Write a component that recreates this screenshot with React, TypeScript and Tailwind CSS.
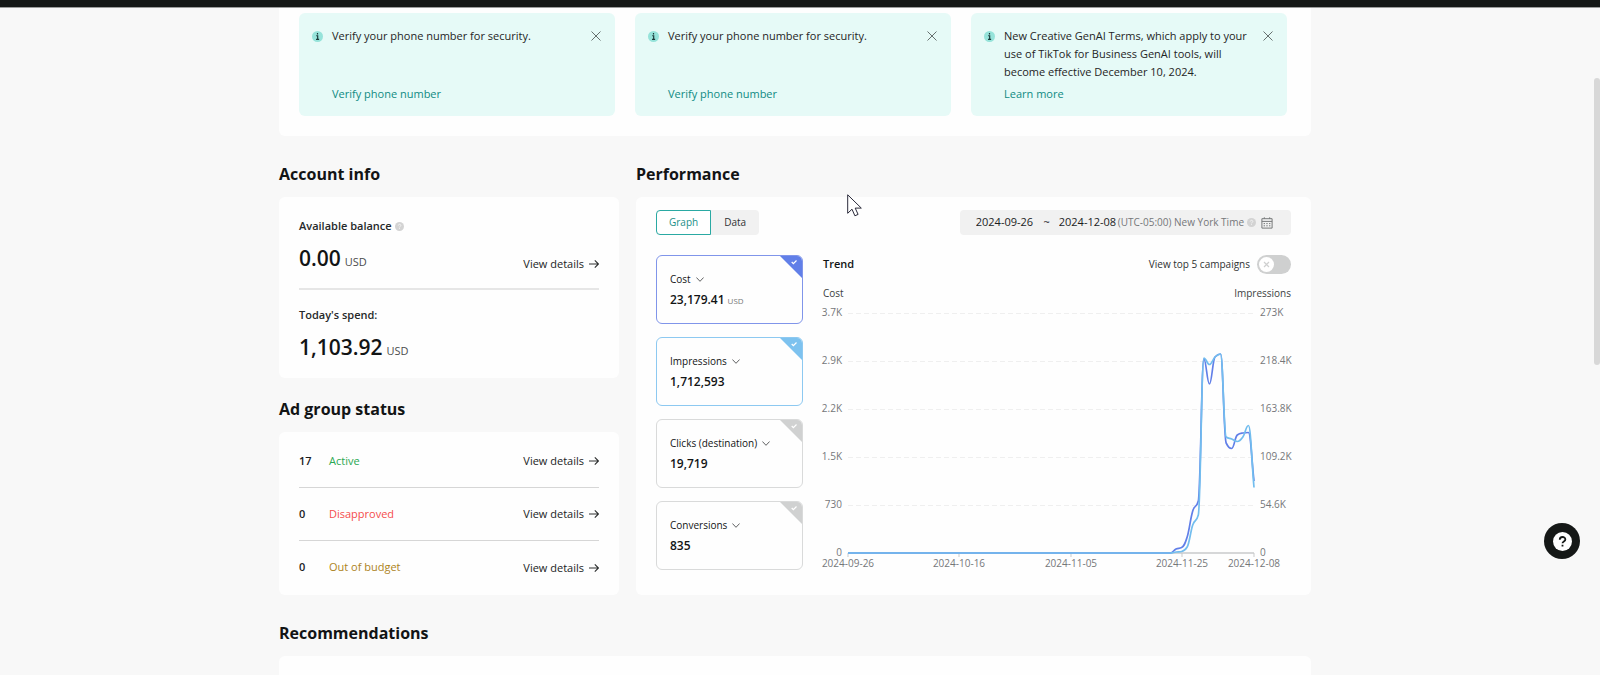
import { useState } from "react";
import type { ReactNode } from "react";

type Point = [number, number];

const DAY = 5.57;
const PLOT_LEFT = 25;
const PLOT_RIGHT = 431;
const AXIS_Y = 250;

const costLevels = [250, 246, 244.5, 234, 208, 198, 56, 81, 54, 51, 140, 145.5, 132, 130, 129.5, 178];
const impressionLevels = [250, 249, 248.5, 244, 222, 212, 55, 61.5, 54, 51, 134, 136, 138.5, 134, 122.5, 184.5];

function toSeries(levels: number[]): Point[] {
  const tail = levels.map((y, i): Point => [PLOT_RIGHT - (levels.length - 1 - i) * DAY, y]);
  return [[PLOT_LEFT, AXIS_Y], ...tail];
}

function smoothPath(points: Point[]): string {
  const n = points.length;
  const slopes = points.slice(1).map((p, i) => (p[1] - points[i][1]) / (p[0] - points[i][0]));
  const tangents = points.map((_, i) => {
    if (i === 0) return slopes[0];
    if (i === n - 1) return slopes[n - 2];
    const a = slopes[i - 1];
    const b = slopes[i];
    if (a * b <= 0) return 0;
    return Math.sign(a) * Math.min(Math.abs(a), Math.abs(b), Math.abs(a + b) / 4) * 2;
  });
  let d = `M${points[0][0]},${points[0][1]}`;
  for (let i = 1; i < n; i++) {
    const [x0, y0] = points[i - 1];
    const [x1, y1] = points[i];
    const h = (x1 - x0) / 2.4;
    d += `C${x0 + h},${y0 + tangents[i - 1] * h} ${x1 - h},${y1 - tangents[i] * h} ${x1},${y1}`;
  }
  return d;
}

const gridRows = [
  { y: 10, left: "3.7K", right: "273K" },
  { y: 58, left: "2.9K", right: "218.4K" },
  { y: 106, left: "2.2K", right: "163.8K" },
  { y: 154, left: "1.5K", right: "109.2K" },
  { y: 202, left: "730", right: "54.6K" },
  { y: 250, left: "0", right: "0" },
];

const dateTicks = [
  { x: 25, label: "2024-09-26" },
  { x: 136, label: "2024-10-16" },
  { x: 248, label: "2024-11-05" },
  { x: 359, label: "2024-11-25" },
  { x: 431, label: "2024-12-08" },
];

function TrendChart() {
  return (
    <svg viewBox="0 0 468 268" className="block w-full overflow-visible text-[10px]" role="img" aria-label="Cost and impressions trend">
      {gridRows.map((row) => (
        <g key={row.y} fill="#75777a">
          {row.y < AXIS_Y && (
            <line x1={PLOT_LEFT} x2={PLOT_RIGHT} y1={row.y + 0.5} y2={row.y + 0.5} stroke="#efefef" strokeDasharray="5 3" />
          )}
          <text x="19" y={row.y + 3} textAnchor="end">{row.left}</text>
          <text x="437" y={row.y + 3}>{row.right}</text>
        </g>
      ))}
      <line x1={PLOT_LEFT} x2={PLOT_RIGHT} y1={AXIS_Y} y2={AXIS_Y} stroke="#c9cacb" strokeWidth="1.5" />
      {dateTicks.map((tick) => (
        <g key={tick.label}>
          <line x1={tick.x} x2={tick.x} y1={AXIS_Y} y2={AXIS_Y + 4} stroke="#c9cacb" />
          <text x={tick.x} y={AXIS_Y + 14} textAnchor="middle" fill="#75777a">{tick.label}</text>
        </g>
      ))}
      <path d={smoothPath(toSeries(costLevels))} fill="none" stroke="#617fe8" strokeWidth="1.7" />
      <path d={smoothPath(toSeries(impressionLevels))} fill="none" stroke="#72bdee" strokeWidth="1.7" />
    </svg>
  );
}

function InfoIcon() {
  return (
    <svg viewBox="0 0 12 12" className="mt-[4px] size-[11px] shrink-0" aria-hidden="true">
      <circle cx="6" cy="6" r="6" fill="#96e3da" />
      <path d="M6 2.2v1.6M4.6 5.2H6.2V9M4.4 9.2h3.4" stroke="#1b3a3a" strokeWidth="1.3" fill="none" />
    </svg>
  );
}

function HelpDot() {
  return (
    <svg viewBox="0 0 10 10" className="size-[9px] shrink-0" aria-hidden="true">
      <circle cx="5" cy="5" r="5" fill="#d3d3d3" />
      <path d="M3.6 4c0-1.9 2.9-1.8 2.9-.2C6.5 4.9 5 4.8 5 6M5 6.9v.9" stroke="#f5f5f5" strokeWidth="1" fill="none" />
    </svg>
  );
}

function Notice({ text, action }: { text: string; action: string }) {
  return (
    <section className="flex items-start rounded-md bg-[#e6faf7] pt-[14px] pr-[14px] pb-[13px] pl-[13px]">
      <InfoIcon />
      <div className="ml-[9px] flex-1">
        <p className="min-h-[54px] text-[11px] leading-[18px] text-[#1f2525]">{text}</p>
        <a href="#" className="mt-1 block text-[11px] leading-[18px] text-[#0f8a83]">{action}</a>
      </div>
      <button type="button" aria-label="Dismiss" className="mt-[4px] ml-[10px] shrink-0">
        <svg viewBox="0 0 10 10" className="size-[10px]">
          <path d="M.5.5l9 9M9.5.5l-9 9" stroke="#66706f" strokeWidth="1" />
        </svg>
      </button>
    </section>
  );
}

function ViewDetails() {
  return (
    <a href="#" className="flex items-center gap-[5px] text-[11px] leading-[18px] text-[#222424]">
      View details
      <svg viewBox="0 0 10 10" className="size-[10px]" aria-hidden="true">
        <path d="M0 5h9.4M5.8 1.4L9.4 5 5.8 8.6" stroke="#2e3030" strokeWidth="1.1" fill="none" />
      </svg>
    </a>
  );
}

function Amount({ value }: { value: string }) {
  return (
    <p className="flex items-baseline gap-1 text-[21px] leading-[30px] font-semibold text-[#121415]">
      {value}
      <span className="text-[11px] leading-[18px] font-normal text-[#4a4c4d]">USD</span>
    </p>
  );
}

function SectionTitle({ children }: { children: ReactNode }) {
  return <h2 className="mb-[11px] text-base leading-6 font-bold text-[#121415]">{children}</h2>;
}

interface Metric {
  name: string;
  value: string;
  unit?: string;
  checked: boolean;
  border: string;
  corner: string;
}

const metrics: Metric[] = [
  { name: "Cost", value: "23,179.41", unit: "USD", checked: true, border: "border-[#8095ea]", corner: "text-[#617fe8]" },
  { name: "Impressions", value: "1,712,593", checked: true, border: "border-[#8dc9f1]", corner: "text-[#7dc2ef]" },
  { name: "Clicks (destination)", value: "19,719", checked: false, border: "border-[#d9dada]", corner: "text-[#d0d1d1]" },
  { name: "Conversions", value: "835", checked: false, border: "border-[#d9dada]", corner: "text-[#d0d1d1]" },
];

function MetricCard({ metric }: { metric: Metric }) {
  return (
    <div className={`relative h-[69px] overflow-hidden rounded-md border pt-[14px] pl-[13px] ${metric.border}`}>
      <button type="button" aria-haspopup="listbox" className="flex items-center gap-[5px] text-[10px] leading-[18px] font-medium text-[#121415]">
        {metric.name}
        <svg viewBox="0 0 8 5" className="h-[5px] w-2" aria-hidden="true">
          <path d="M.4.5L4 4.3 7.6.5" stroke="#4d4f50" strokeWidth=".9" fill="none" />
        </svg>
      </button>
      <p className="mt-[2px] flex items-baseline gap-[3px] text-xs leading-5 font-semibold text-[#121415]">
        {metric.value}
        {metric.unit && <span className="text-[8px] font-normal text-[#77797a]">{metric.unit}</span>}
      </p>
      <label className={`absolute top-0 right-0 ${metric.corner}`}>
        <input type="checkbox" defaultChecked={metric.checked} aria-label={metric.name} className="sr-only" />
        <svg viewBox="0 0 22 22" className="size-[22px]">
          <path d="M0 0h22v22z" fill="currentColor" />
          <path d="M11.7 6l1.7 1.7L16.5 4.5" stroke="#fff" strokeWidth="1.2" fill="none" />
        </svg>
      </label>
    </div>
  );
}

const statuses = [
  { count: 17, label: "Active", color: "text-[#2aa852]" },
  { count: 0, label: "Disapproved", color: "text-[#f54c4c]" },
  { count: 0, label: "Out of budget", color: "text-[#ad831c]" },
];

export default function App() {
  const [view, setView] = useState("Graph");
  return (
    <div className="relative flex h-screen flex-col overflow-hidden bg-[#f8f8f8] font-['Open_Sans','Noto_Sans',sans-serif]">
      <header className="h-2 shrink-0 border-b border-[#9b9c9c] bg-[#151817]" />
      <main className="flex grow flex-col pr-2.5">
        <div className="mx-auto flex w-full max-w-[1032px] grow flex-col">
          <div className="grid grid-cols-3 gap-5 rounded-b-md bg-[#fefefe] pt-[5px] pr-6 pb-5 pl-5">
            <Notice text="Verify your phone number for security." action="Verify phone number" />
            <Notice text="Verify your phone number for security." action="Verify phone number" />
            <Notice
              text="New Creative GenAI Terms, which apply to your use of TikTok for Business GenAI tools, will become effective December 10, 2024."
              action="Learn more"
            />
          </div>

          <div className="mt-[26px] flex gap-[17px]">
            <div className="flex w-[340px] shrink-0 flex-col">
              <SectionTitle>Account info</SectionTitle>
              <section className="mb-[19px] rounded-md bg-[#fefefe] px-5">
                <div className="border-b-2 border-[#e6e6e6] pt-5 pb-[15px]">
                  <h3 className="flex items-center gap-[3px] text-[11px] leading-[18px] font-semibold text-[#26292a]">
                    Available balance <HelpDot />
                  </h3>
                  <div className="mt-2 flex items-end justify-between">
                    <Amount value="0.00" />
                    <ViewDetails />
                  </div>
                </div>
                <div className="py-4">
                  <h3 className="text-[11px] leading-[18px] font-semibold text-[#26292a]">Today's spend:</h3>
                  <div className="mt-2">
                    <Amount value="1,103.92" />
                  </div>
                </div>
              </section>

              <SectionTitle>Ad group status</SectionTitle>
              <ul className="rounded-md bg-[#fefefe] px-5 pt-[3px] pb-px">
                {statuses.map((s, i) => (
                  <li key={s.label} className={`flex h-[53px] items-center text-[11px] ${i < 2 ? "border-b border-[#d6d6d6]" : ""}`}>
                    <span className="w-[30px] font-semibold text-[#1b1d1e]">{s.count}</span>
                    <span className={`flex-1 ${s.color}`}>{s.label}</span>
                    <ViewDetails />
                  </li>
                ))}
              </ul>
            </div>

            <div className="flex min-w-0 flex-1 flex-col">
              <SectionTitle>Performance</SectionTitle>
              <section className="grow rounded-md bg-[#fefefe] px-5 pt-[13px]">
                <div className="flex justify-between">
                  <div className="flex h-[25px] rounded-sm bg-[#f1f1f1] text-[10px]">
                    {["Graph", "Data"].map((name) => (
                      <button
                        key={name}
                        type="button"
                        aria-pressed={view === name}
                        onClick={() => setView(name)}
                        className={
                          view === name
                            ? "rounded-l-sm border border-[#2aa9a3] bg-white px-3 font-medium text-[#1a8f88]"
                            : "px-[13px] font-medium text-[#303233]"
                        }
                      >
                        {name}
                      </button>
                    ))}
                  </div>
                  <div className="flex h-[25px] items-center rounded-sm bg-[#f1f1f1] pr-[18px] pl-4 text-[11px] text-[#1b1d1e]">
                    <input type="text" aria-label="Start date" defaultValue="2024-09-26" className="w-[59px] font-medium" />
                    <span className="w-[24px] text-center">~</span>
                    <input type="text" aria-label="End date" defaultValue="2024-12-08" className="w-[59px] font-medium" />
                    <span className="mr-[3px] text-[10px] text-[#75777a]">(UTC-05:00) New York Time</span>
                    <HelpDot />
                    <button type="button" aria-label="Open calendar" className="ml-[5px]">
                      <svg viewBox="0 0 12 12" className="size-[12px]" fill="none" stroke="#77797a">
                        <path d="M.9 1.7h10.2v9.4H.9zM.9 4.4h10.2M3.3.3v1.6M8.7.3v1.6" />
                        <path d="M2.6 6.6h7M2.6 8.8h7" strokeDasharray="1.4 1.3" />
                      </svg>
                    </button>
                  </div>
                </div>

                <div className="mt-5 flex gap-5">
                  <div className="flex w-[147px] shrink-0 flex-col gap-[13px]">
                    {metrics.map((m) => (
                      <MetricCard key={m.name} metric={m} />
                    ))}
                  </div>
                  <div className="min-w-0 flex-1">
                    <div className="flex h-[19px] items-center justify-between">
                      <h3 className="text-[11px] font-semibold text-[#121415]">Trend</h3>
                      <label className="flex items-center gap-[7px] text-[10px] text-[#303233]">
                        View top 5 campaigns
                        <input type="checkbox" role="switch" className="peer sr-only" />
                        <span className="flex h-[19px] w-[34px] items-center rounded-full bg-[#cfd0d0] p-[2px] peer-checked:justify-end peer-checked:bg-[#2aa9a3]">
                          <svg viewBox="0 0 15 15" className="size-[15px]" aria-hidden="true">
                            <circle cx="7.5" cy="7.5" r="7.5" fill="#fff" />
                            <path d="M5 5l5 5M10 5l-5 5" stroke="#cfd0d0" strokeWidth="1.2" />
                          </svg>
                        </span>
                      </label>
                    </div>
                    <div className="mt-[10px] flex h-[19px] items-center justify-between text-[10px] text-[#3c3e3f]">
                      <span>Cost</span>
                      <span>Impressions</span>
                    </div>
                    <TrendChart />
                  </div>
                </div>
              </section>
            </div>
          </div>

          <div className="mt-[26px] flex grow flex-col">
            <SectionTitle>Recommendations</SectionTitle>
            <section className="grow rounded-t-md bg-[#fefefe]" />
          </div>
        </div>
      </main>

      <div className="absolute top-[78px] right-0 h-[287px] w-[6px] rounded-full bg-[#d8d8d8]" />
      <button type="button" aria-label="Help" className="absolute right-5 bottom-[116px] flex size-[36px] items-center justify-center rounded-full bg-[#151817]">
        <svg viewBox="0 0 20 20" className="size-[19px]">
          <circle cx="10" cy="10" r="10" fill="#fff" />
          <path d="M7.1 8.2c0-4 5.9-3.7 5.9-.4 0 2.1-3 2.1-3 4M10 13.4v1.9" stroke="#151817" strokeWidth="1.9" fill="none" />
        </svg>
      </button>
      <svg viewBox="0 0 16 24" className="pointer-events-none absolute top-[194px] left-[847px] h-6 w-4" aria-hidden="true">
        <path d="M.7.8v18.5l4.3-4.1 2.9 6.6 3.2-1.4-2.9-6.3h6.1z" fill="#fff" stroke="#2a2a3a" strokeWidth="1" />
      </svg>
    </div>
  );
}
